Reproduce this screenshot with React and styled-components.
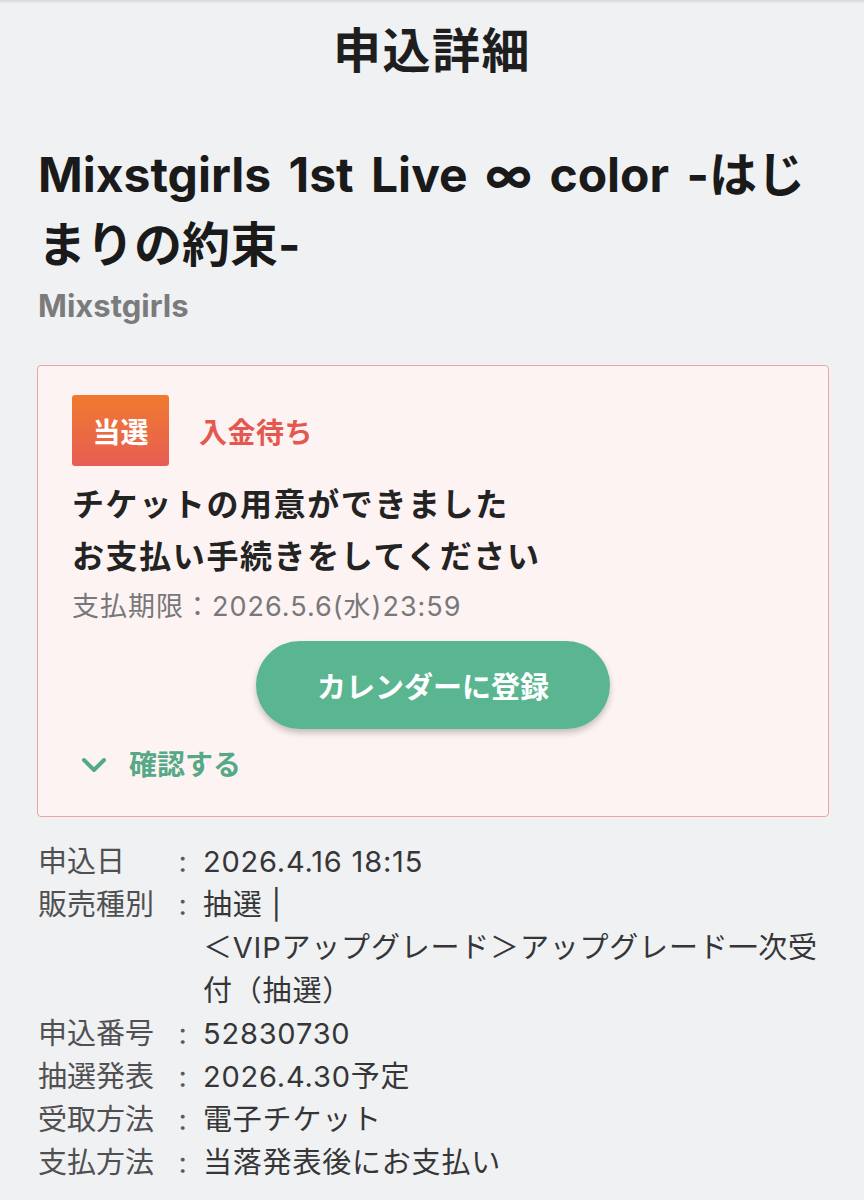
import React from "react";
import styled, { createGlobalStyle } from "styled-components";

const Global = createGlobalStyle`
  html, body { margin: 0; padding: 0; background: #f0f1f3; }
  body {
    font-family: Inter, "Noto Sans CJK JP", "Noto Sans", sans-serif;
    color: #222;
  }
  * { box-sizing: border-box; }
`;

const Page = styled.div`
  min-height: 1200px;
  background: #f0f1f3;
`;

const TopShade = styled.div`
  height: 4px;
  background: linear-gradient(#d6d7da, #f0f1f3);
`;

const Header = styled.header`
  padding: 17px 0 27px;
  text-align: center;
  font-size: 48px;
  line-height: 60px;
  font-weight: 700;
  color: #1e1e1e;
  letter-spacing: 1.5px;
`;

const Main = styled.main`
  padding: 32px 36px 0 38px;
`;

const EventTitle = styled.h1`
  margin: 0;
  font-size: 48px;
  line-height: 70px;
  font-weight: 700;
  color: #1a1a1a;
  word-spacing: 6px;
  max-width: 780px;
`;

const Artist = styled.div`
  margin-top: 6px;
  font-size: 31px;
  line-height: 40px;
  font-weight: 700;
  color: #7b7b7d;
`;

const Card = styled.section`
  margin-top: 39px;
  margin-left: -1px;
  width: 792px;
  border: 1.5px solid #eba6a3;
  border-radius: 4px;
  background: #fdf3f3;
  padding: 29px 34px 31px 34px;
  display: flex;
  flex-direction: column;
`;

const StatusRow = styled.div`
  display: flex;
  align-items: center;
  gap: 30px;
`;

const Badge = styled.div`
  width: 97px;
  height: 71px;
  border-radius: 3px;
  background: linear-gradient(180deg, #f07a2f 0%, #e75d54 100%);
  color: #fff;
  font-size: 28px;
  font-weight: 700;
  display: flex;
  align-items: center;
  justify-content: center;
`;

const StatusText = styled.div`
  font-size: 28px;
  letter-spacing: 0.5px;
  font-weight: 700;
  color: #e4584f;
`;

const Message = styled.p`
  margin: 13px 0 0;
  font-size: 32px;
  line-height: 52px;
  font-weight: 700;
  color: #232323;
  letter-spacing: 1.6px;
`;

const Deadline = styled.div`
  margin-top: 6px;
  font-size: 27px;
  line-height: 36px;
  letter-spacing: 1px;
  color: #78787a;
`;

const CalendarButton = styled.button`
  margin: 16px auto 0;
  width: 354px;
  height: 88px;
  border: none;
  border-radius: 44px;
  background: #59b690;
  color: #fff;
  font-family: inherit;
  font-size: 29px;
  font-weight: 700;
  box-shadow: 0 4px 6px rgba(0, 0, 0, 0.22);
  cursor: pointer;
`;

const Toggle = styled.div`
  margin-top: 16px;
  display: flex;
  align-items: center;
  gap: 22px;
  padding-left: 9px;
  font-size: 28px;
  line-height: 40px;
  font-weight: 700;
  color: #55a987;
`;

const DetailList = styled.dl`
  margin: 23px 0 0;
  display: grid;
  grid-template-columns: 133px 24px 1fr;
  font-size: 29px;
  line-height: 43px;
  letter-spacing: 0.8px;
  color: #3a3a3a;
`;

const Label = styled.dt`
  margin: 0;
  letter-spacing: 0;
  color: #505052;
`;

const Colon = styled.span`
  text-align: center;
  color: #5a5a5a;
`;

const Value = styled.dd`
  margin: 0 0 0 8px;
  color: #363638;
`;

const details = [
  ["申込日", "2026.4.16 18:15"],
  ["販売種別", "抽選 |\n＜VIPアップグレード＞アップグレード一次受付（抽選）"],
  ["申込番号", "52830730"],
  ["抽選発表", "2026.4.30予定"],
  ["受取方法", "電子チケット"],
  ["支払方法", "当落発表後にお支払い"],
];

const Chevron = () => (
  <svg width="26" height="16" viewBox="0 0 26 16" fill="none">
    <polyline
      points="3,3 13,13 23,3"
      stroke="#55a987"
      strokeWidth="4"
      strokeLinecap="round"
      strokeLinejoin="round"
    />
  </svg>
);

export default function App() {
  return (
    <Page>
      <Global />
      <TopShade />
      <Header>申込詳細</Header>
      <Main>
        <EventTitle>Mixstgirls 1st Live ∞ color -はじまりの約束-</EventTitle>
        <Artist>Mixstgirls</Artist>
        <Card>
          <StatusRow>
            <Badge>当選</Badge>
            <StatusText>入金待ち</StatusText>
          </StatusRow>
          <Message>
            チケットの用意ができました
            <br />
            お支払い手続きをしてください
          </Message>
          <Deadline>支払期限：2026.5.6(水)23:59</Deadline>
          <CalendarButton>カレンダーに登録</CalendarButton>
          <Toggle>
            <Chevron />
            確認する
          </Toggle>
        </Card>
        <DetailList>
          {details.map(([k, v]) => (
            <React.Fragment key={k}>
              <Label>{k}</Label>
              <Colon>:</Colon>
              <Value>
                {v.split("\n").map((line, i) => (
                  <div key={i}>{line}</div>
                ))}
              </Value>
            </React.Fragment>
          ))}
        </DetailList>
      </Main>
    </Page>
  );
}
